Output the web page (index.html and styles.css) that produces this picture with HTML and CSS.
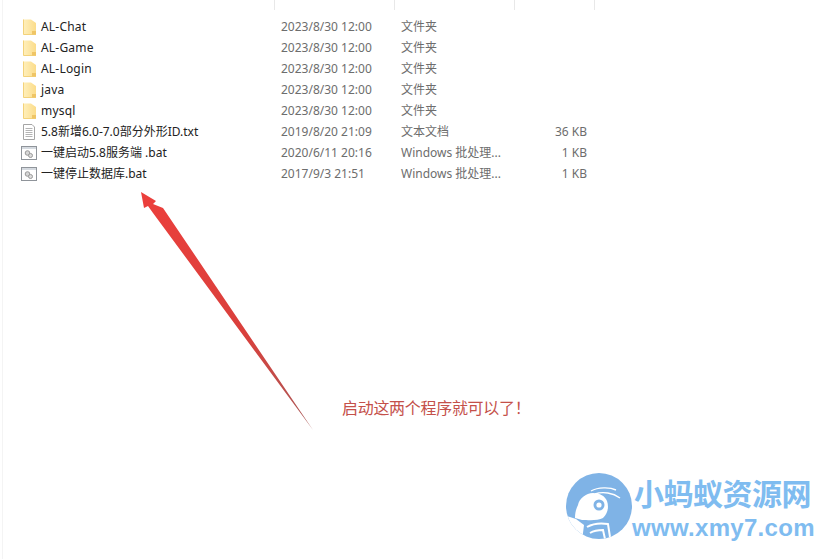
FILE: index.html
```html
<!DOCTYPE html>
<html lang="en">

<head>
  <meta charset="UTF-8">
  <title>Document</title>
  <link rel="stylesheet" href="styles.css">
</head>

<body>
  <div class="window">
    <div class="head">
      <div class="cell name_col"><span>名称</span></div>
      <div class="cell"><span>修改日期</span></div>
      <div class="cell"><span>类型</span></div>
      <div class="cell"><span>大小</span></div>
    </div>

    <div class="row">
      <div class="name_col"><svg class="icon"><use href="#folder"></use></svg><span class="filename">AL-Chat</span></div>
      <div class="info">2023/8/30 12:00</div>
      <div class="info">文件夹</div>
      <div class="info size"></div>
    </div>
    <div class="row">
      <div class="name_col"><svg class="icon"><use href="#folder"></use></svg><span class="filename">AL-Game</span></div>
      <div class="info">2023/8/30 12:00</div>
      <div class="info">文件夹</div>
      <div class="info size"></div>
    </div>
    <div class="row">
      <div class="name_col"><svg class="icon"><use href="#folder"></use></svg><span class="filename">AL-Login</span></div>
      <div class="info">2023/8/30 12:00</div>
      <div class="info">文件夹</div>
      <div class="info size"></div>
    </div>
    <div class="row">
      <div class="name_col"><svg class="icon"><use href="#folder"></use></svg><span class="filename">java</span></div>
      <div class="info">2023/8/30 12:00</div>
      <div class="info">文件夹</div>
      <div class="info size"></div>
    </div>
    <div class="row">
      <div class="name_col"><svg class="icon"><use href="#folder"></use></svg><span class="filename">mysql</span></div>
      <div class="info">2023/8/30 12:00</div>
      <div class="info">文件夹</div>
      <div class="info size"></div>
    </div>
    <div class="row">
      <div class="name_col"><svg class="icon"><use href="#textfile"></use></svg><span class="filename cjk">5.8新增6.0-7.0部分外形ID.txt</span></div>
      <div class="info">2019/8/20 21:09</div>
      <div class="info">文本文档</div>
      <div class="info size">36 KB</div>
    </div>
    <div class="row">
      <div class="name_col"><svg class="icon"><use href="#batfile"></use></svg><span class="filename cjk">一键启动5.8服务端 .bat</span></div>
      <div class="info">2020/6/11 20:16</div>
      <div class="info">Windows 批处理...</div>
      <div class="info size">1 KB</div>
    </div>
    <div class="row">
      <div class="name_col"><svg class="icon"><use href="#batfile"></use></svg><span class="filename cjk">一键停止数据库.bat</span></div>
      <div class="info">2017/9/3 21:51</div>
      <div class="info">Windows 批处理...</div>
      <div class="info size">1 KB</div>
    </div>
  </div>

  <!-- arrow + note sit on top of the screenshot -->
  <svg class="arrow" viewBox="0 0 818 559">
    <defs>
      <linearGradient id="arrowFill" gradientUnits="userSpaceOnUse" x1="141" y1="192" x2="313" y2="430">
        <stop offset="0" stop-color="#ec3f3c"></stop>
        <stop offset=".6" stop-color="#d9403c"></stop>
        <stop offset="1" stop-color="#a85a58"></stop>
      </linearGradient>
    </defs>
    <path d="M141 192 L156 201 L153 204 L163 208 L313 430 L153 213 L148 206 L144 208 Z" fill="url(#arrowFill)"></path>
  </svg>
  <div class="note">启动这两个程序就可以了！</div>

  <div class="logo">
    <svg class="logo_mark" viewBox="0 0 70 66">
      <defs>
        <clipPath id="disc"><circle cx="35" cy="33" r="33"></circle></clipPath>
      </defs>
      <circle cx="35" cy="33" r="33" fill="#7fb3e6"></circle>
      <g clip-path="url(#disc)">
        <path d="M0 42 L12 46 L20 52 L18 68 L0 68 Z" fill="#fff"></path>
        <path d="M14 32 C15 26 22 20 29 20 C36 20 41 23 43 28 C45 34 44 40 39 45 C34 48 24 47 18 47 L11 45 C11 40 12 36 14 32 Z" fill="#fff"></path>
        <path d="M27 18 C34 14 46 14 52 17 M31 21 C39 18 49 20 56 25" fill="none" stroke="#fff" stroke-width="1.4"></path>
        <path d="M23 54 C30 50 38 50 44 51 L46 64 M26 60 C31 57 35 57 39 57 L41 66" fill="none" stroke="#fff" stroke-width="2"></path>
      </g>
      <circle cx="35" cy="32" r="5.5" fill="#7fb3e6"></circle>
      <circle cx="35" cy="32" r="2.6" fill="#fff"></circle>
    </svg>
    <div class="logo_text">
      <div class="logo_cn">小蚂蚁资源网</div>
      <div class="logo_en">www.xmy7.com</div>
    </div>
  </div>

  <svg class="defs" width="0" height="0">
    <defs>
      <linearGradient id="folderFill" x1="0" y1="0" x2="1" y2="0">
        <stop offset="0" stop-color="#fff0bd"></stop>
        <stop offset="1" stop-color="#fbdc8a"></stop>
      </linearGradient>
    </defs>
    <symbol id="folder" viewBox="0 0 16 16">
      <path d="M2 .5 H10 L15 4 V15.5 H2 Z" fill="url(#folderFill)"></path>
      <path d="M2.5 .5 V15.5 H15" fill="none" stroke="#f3d27a"></path>
      <path d="M11 15.5 V12 H15 V15.5 Z" fill="#efc566"></path>
    </symbol>
    <symbol id="textfile" viewBox="0 0 16 16">
      <path d="M2.5 .5 H11 L13.5 3 V15.5 H2.5 Z" fill="#fff" stroke="#a5a5a5"></path>
      <path d="M4.5 4.5 H11.5 M4.5 6.5 H11.5 M4.5 8.5 H11.5 M4.5 10.5 H11.5 M4.5 12.5 H11.5" stroke="#b4b4b4"></path>
    </symbol>
    <symbol id="batfile" viewBox="0 0 16 16">
      <rect x=".5" y="1.5" width="15" height="13" fill="#fff" stroke="#8f949a"></rect>
      <rect x="1" y="2" width="14" height="2" fill="#d5dae0"></rect>
      <circle cx="6.5" cy="8" r="2.3" fill="#d6d6d6" stroke="#9a9a9a"></circle>
      <circle cx="9.5" cy="10.5" r="2" fill="#dcdcdc" stroke="#9a9a9a"></circle>
    </symbol>
  </svg>
</body>

</html>
```

FILE: styles.css
```css
* {
  margin: 0;
  padding: 0;
  box-sizing: border-box;
}

body {
  width: 818px;
  height: 559px;
  overflow: hidden;
  background-color: #fff;
  font-family: "Noto Sans", "Noto Sans CJK SC", sans-serif;
  font-size: 12px;
  color: #222;
}

.window {
  height: 100%;
  margin-left: 2px;
  border-left: 1px solid #f4f4f4;
}

.head,
.row {
  display: grid;
  grid-template-columns: 272px 120px 120px 80px;
}

.head {
  height: 16px;
  color: #4c607a;
}

.cell {
  height: 10px;
  overflow: hidden;
  border-right: 1px solid #e8e8e8;
  padding-left: 6px;
}

.cell span {
  display: block;
  line-height: 16px;
  margin-top: -14px;
}

.head .name_col {
  display: block;
  padding-left: 19px;
}

.row {
  height: 21px;
  line-height: 21px;
}

.name_col {
  display: flex;
  align-items: center;
  padding-left: 18px;
  white-space: nowrap;
}

.icon {
  width: 16px;
  height: 16px;
  flex-shrink: 0;
}

.filename {
  margin-left: 4px;
  letter-spacing: .2px;
}

.cjk {
  letter-spacing: 0;
}

.info {
  padding-left: 6px;
  color: #6d6d6d;
  white-space: nowrap;
}

.size {
  text-align: right;
  padding-right: 8px;
}

.arrow {
  position: absolute;
  left: 0;
  top: 0;
  width: 818px;
  height: 559px;
}

.note {
  position: absolute;
  left: 342px;
  top: 397px;
  font-size: 16px;
  letter-spacing: -.3px;
  line-height: 22px;
  color: #c4504a;
}

.logo {
  position: absolute;
  left: 564px;
  top: 473px;
  display: flex;
  align-items: flex-start;
  color: #7fbcf0;
}

.logo_mark {
  width: 70px;
  height: 66px;
}

.logo_cn {
  font-size: 30px;
  font-weight: 700;
  line-height: 36px;
  letter-spacing: -.5px;
  margin-top: 3px;
}

.logo_en {
  font-family: "Liberation Sans", sans-serif;
  font-size: 24px;
  font-weight: 700;
  line-height: 26px;
  letter-spacing: .3px;
  margin-top: 3px;
  margin-left: -2px;
}

.defs {
  position: absolute;
}
```
